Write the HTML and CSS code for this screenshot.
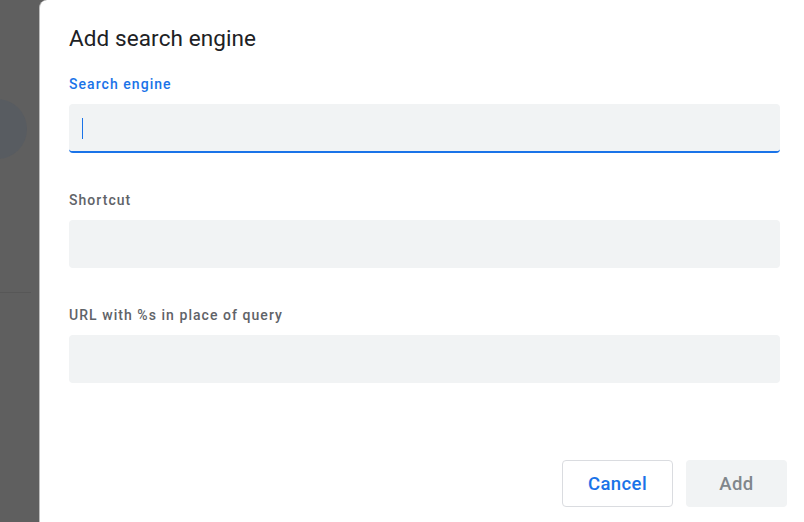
FILE: index.html
```html
<!DOCTYPE html>
<html>
<head>
<meta charset="utf-8">
<link rel="stylesheet" href="styles.css">
</head>
<body>
<div class="page">
  <div class="backdrop">
    <div class="bd-circle"></div>
    <div class="bd-line"></div>
  </div>
  <div class="dialog">
    <h1 class="title">Add search engine</h1>
    <div class="field field-first">
      <div class="label label-focused">Search engine</div>
      <div class="input input-focused"><span class="caret"></span></div>
    </div>
    <div class="field">
      <div class="label">Shortcut</div>
      <div class="input"></div>
    </div>
    <div class="field">
      <div class="label">URL with %s in place of query</div>
      <div class="input"></div>
    </div>
    <div class="actions">
      <button class="btn btn-cancel">Cancel</button>
      <button class="btn btn-add">Add</button>
    </div>
  </div>
</div>
</body>
</html>
```
FILE: styles.css
```css
html, body {
  margin: 0;
  padding: 0;
  height: 100%;
  overflow: hidden;
}
body {
  background: #5f5f5f;
  font-family: Roboto, "Liberation Sans", sans-serif;
}
.page {
  display: flex;
  height: 522px;
  width: 804px;
}
.backdrop {
  position: relative;
  width: 39px;
  flex: none;
  background: #5f5f5f;
  overflow: hidden;
}
.bd-circle {
  position: absolute;
  left: -33px;
  top: 99px;
  width: 60px;
  height: 60px;
  border-radius: 50%;
  background: #585c61;
}
.bd-line {
  position: absolute;
  left: 0;
  top: 292px;
  width: 31px;
  height: 1px;
  background: #575757;
}
.dialog {
  flex: 1;
  background: #fff;
  border-left: 1px solid #bdbdbd;
  border-top-left-radius: 8px;
  padding: 24px 24px 0 29px;
  margin-right: -30px;
  display: flex;
  flex-direction: column;
}
.title {
  margin: 0;
  font-size: 22.5px;
  font-weight: 400;
  line-height: 28px;
  letter-spacing: 0.1px;
  color: #202124;
}
.field {
  margin-top: 39px;
  display: flex;
  flex-direction: column;
  gap: 11px;
}
.field-first {
  margin-top: 24px;
}
.label {
  font-size: 14px;
  font-weight: 500;
  line-height: 17px;
  letter-spacing: 1.05px;
  color: #5f6368;
}
.label-focused {
  color: #1a73e8;
}
.input {
  height: 48px;
  width: 711px;
  background: #f1f3f4;
  border-radius: 4px;
  box-sizing: border-box;
  position: relative;
}
.input-focused {
  height: 49px;
  border-bottom: 2px solid #1a73e8;
}
.caret {
  position: absolute;
  left: 13px;
  top: 14px;
  width: 1px;
  height: 21px;
  background: #1a73e8;
}
.actions {
  margin-top: auto;
  margin-bottom: 15px;
  display: flex;
  gap: 13px;
  padding-left: 493px;
}
.btn {
  height: 47px;
  border-radius: 4px;
  font-family: Roboto, "Liberation Sans", sans-serif;
  font-size: 18.5px;
  font-weight: 500;
  letter-spacing: 0.4px;
  padding: 0;
  box-sizing: border-box;
}
.btn-cancel {
  width: 111px;
  background: #fff;
  border: 1px solid #dadce0;
  color: #1a73e8;
}
.btn-add {
  width: 101px;
  background: #f1f3f4;
  border: none;
  color: #80868b;
}
```
